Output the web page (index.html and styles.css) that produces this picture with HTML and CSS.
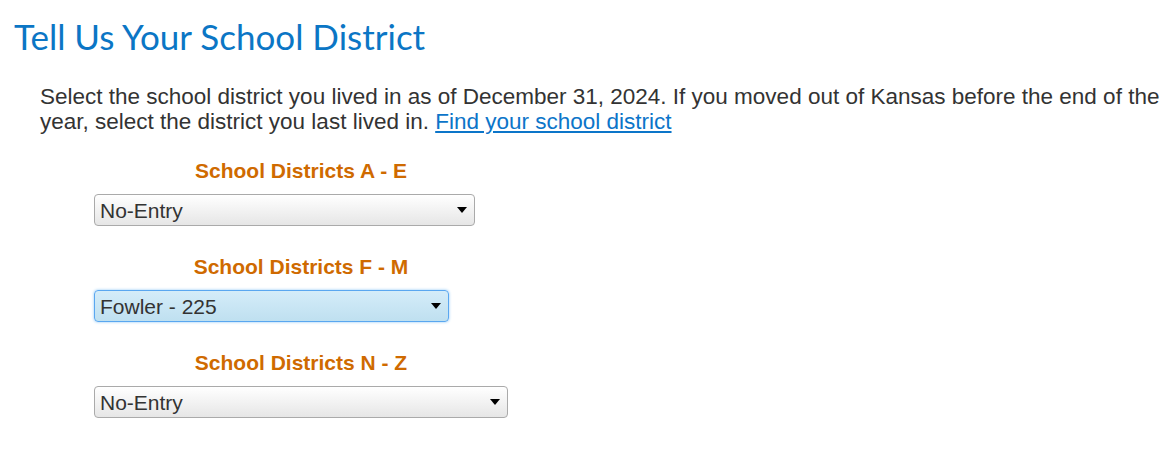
FILE: index.html
```html
<!DOCTYPE html>
<html lang="en">
<head>
    <meta charset="UTF-8">
    <title>Tell Us Your School District</title>
    <link rel="stylesheet" href="styles.css">
</head>
<body>
    <div id="page">
        <h1 class="title">Tell Us Your School District</h1>
        <p class="intro">Select the school district you lived in as of December 31, 2024. If you moved out of Kansas before the end of the year, select the district you last lived in. <a href="#">Find your school district</a></p>
        <div class="districts">
            <div class="group">
                <label class="groupLabel" for="ae">School Districts A - E</label>
                <div class="pick wideA">
                    <select id="ae"><option>No-Entry</option></select>
                </div>
            </div>
            <div class="group">
                <label class="groupLabel" for="fm">School Districts F - M</label>
                <div class="pick wideF">
                    <select id="fm" class="active"><option>No-Entry</option><option selected>Fowler - 225</option></select>
                </div>
            </div>
            <div class="group">
                <label class="groupLabel" for="nz">School Districts N - Z</label>
                <div class="pick wideN">
                    <select id="nz"><option>No-Entry</option></select>
                </div>
            </div>
        </div>
    </div>
</body>
</html>
```
FILE: styles.css
```css
*{
    padding: 0;
    margin: 0;
    box-sizing: border-box;
}
body {
    background-color: #fff;
    font-family: "Liberation Sans", Arial, sans-serif;
    color: #333;
}
#page {
    width: 1172px;
    height: 456px;
    overflow: hidden;
    padding-top: 16px;
}
.title {
    margin-left: 14px;
    font-family: Lato, "Open Sans", sans-serif;
    font-weight: 400;
    font-size: 35px;
    line-height: 40px;
    color: #0b76c5;
}
.intro {
    margin: 28px 0 0 40px;
    width: 1132px;
    font-size: 22.5px;
    line-height: 25px;
    color: #333;
}
.intro a {
    color: #0c75c9;
}
.districts {
    margin: 23px 0 0 94px;
    width: 414px;
}
.group {
    display: flex;
    flex-direction: column;
    height: 96px;
}
.groupLabel {
    display: block;
    text-align: center;
    font-weight: bold;
    font-size: 21px;
    line-height: 24px;
    color: #cf6a00;
    margin-top: 2px;
    margin-bottom: 11px;
}
.pick {
    position: relative;
    height: 32px;
}
.wideA { width: 381px; }
.wideF { width: 355px; }
.wideN { width: 414px; }
.pick select {
    appearance: none;
    -webkit-appearance: none;
    width: 100%;
    height: 32px;
    padding: 0 24px 0 5px;
    font-family: "Liberation Sans", Arial, sans-serif;
    font-size: 21px;
    color: #333;
    border: 1px solid #aaa;
    border-radius: 4px;
    background: linear-gradient(#ffffff, #e6e6e6);
    outline: none;
}
.pick select.active {
    border-color: #5aa7f0;
    background: linear-gradient(#d4ecf9, #bfe0f0);
    box-shadow: 0 0 3px #8cc6f5;
}
/* dropdown arrow */
.pick::after {
    content: "";
    position: absolute;
    right: 8px;
    top: 13px;
    border-left: 5px solid transparent;
    border-right: 5px solid transparent;
    border-top: 6px solid #000;
    pointer-events: none;
}
```
